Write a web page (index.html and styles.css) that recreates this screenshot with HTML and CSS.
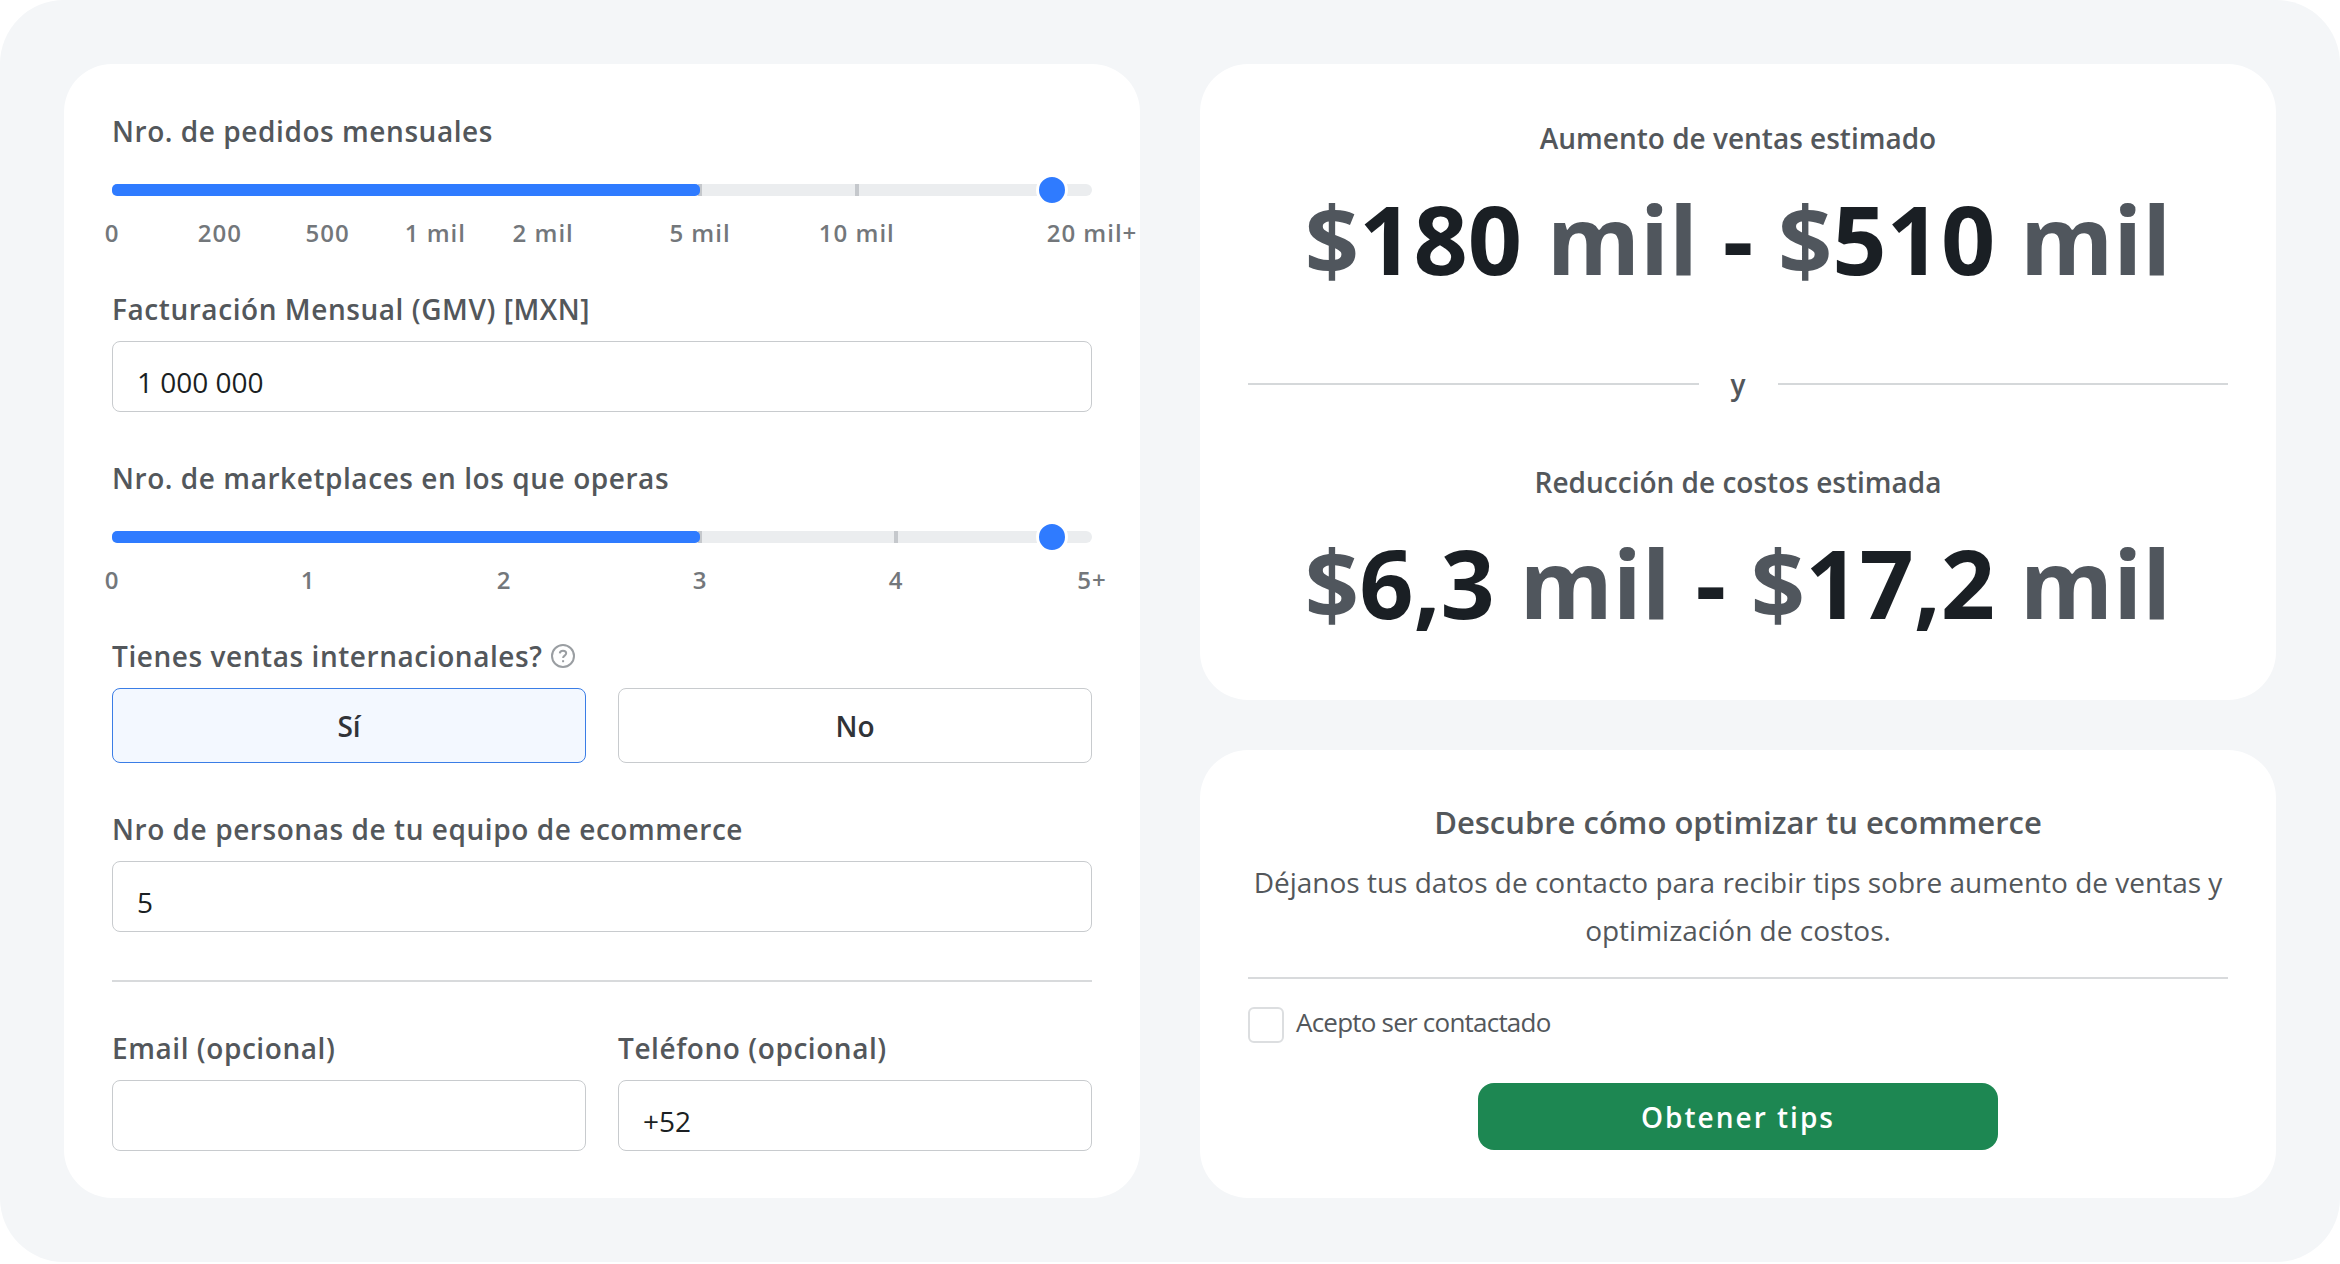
FILE: index.html
```html
<!DOCTYPE html>
<html lang="es">
<head>
	<meta charset="UTF-8">
	<meta name="viewport" content="width=device-width, initial-scale=1">
	<title>Calculadora</title>
	<link rel="stylesheet" href="styles.css">
</head>
<body>
	<main class="calculator">
		<form class="card form" id="calc">
			<div class="field">
				<label for="orders">Nro. de pedidos mensuales</label>
				<div class="slider">
					<div class="track orders">
						<i></i><i></i><i></i><i></i><i></i><i></i><i></i>
					</div>
					<div class="fill" style="width: 60%"></div>
					<input type="range" id="orders" min="0" max="100" step="0.5" value="97.5">
				</div>
				<div class="scale orders">
					<span>0</span>
					<span>200</span>
					<span>500</span>
					<span>1 mil</span>
					<span>2 mil</span>
					<span>5 mil</span>
					<span>10 mil</span>
					<span>20 mil+</span>
				</div>
			</div>

			<div class="field">
				<label for="gmv">Facturación Mensual (GMV) [MXN]</label>
				<input class="text" type="text" id="gmv" value="1 000 000">
			</div>

			<div class="field">
				<label for="markets">Nro. de marketplaces en los que operas</label>
				<div class="slider">
					<div class="track markets">
						<i></i><i></i><i></i><i></i><i></i>
					</div>
					<div class="fill" style="width: 60%"></div>
					<input type="range" id="markets" min="0" max="100" step="0.5" value="97.5">
				</div>
				<div class="scale markets">
					<span>0</span>
					<span>1</span>
					<span>2</span>
					<span>3</span>
					<span>4</span>
					<span>5+</span>
				</div>
			</div>

			<div class="field">
				<div class="label" id="intl">
					Tienes ventas internacionales?
					<svg class="help" viewBox="0 0 24 24" aria-hidden="true">
						<circle cx="12" cy="12" r="11"/>
						<path d="M8.8 9.4C8.9 7.6 10.2 6.7 12 6.7s3.2 1 3.2 2.6c0 2.3-3.1 2.3-3.1 4.7"/>
						<path d="M12.1 16.2v2"/>
					</svg>
				</div>
				<div class="pair" role="group" aria-labelledby="intl">
					<button type="button" class="option active">Sí</button>
					<button type="button" class="option">No</button>
				</div>
			</div>

			<div class="field">
				<label for="team">Nro de personas de tu equipo de ecommerce</label>
				<input class="text" type="text" id="team" value="5">
			</div>

			<hr>

			<div class="pair">
				<div class="field">
					<label for="email">Email (opcional)</label>
					<input class="text" type="email" id="email">
				</div>
				<div class="field">
					<label for="phone">Teléfono (opcional)</label>
					<input class="text" type="tel" id="phone" value="+52">
				</div>
			</div>
		</form>

		<div class="side">
			<section class="card results">
				<h2>Aumento de ventas estimado</h2>
				<p class="amount"><span>$</span>180 <span>mil</span> - <span>$</span>510 <span>mil</span></p>
				<div class="and">y</div>
				<h2>Reducción de costos estimada</h2>
				<p class="amount"><span>$</span>6,3 <span>mil</span> - <span>$</span>17,2 <span>mil</span></p>
			</section>

			<section class="card tips">
				<h3>Descubre cómo optimizar tu ecommerce</h3>
				<p>Déjanos tus datos de contacto para recibir tips sobre aumento de ventas y optimización de costos.</p>
				<hr>
				<label class="accept">
					<input type="checkbox" form="calc">
					Acepto ser contactado
				</label>
				<button type="submit" class="submit" form="calc">Obtener tips</button>
			</section>
		</div>
	</main>

	<script type="text/javascript">
		var options = document.querySelectorAll('.option');
		options.forEach(function(option){
			option.onclick = function(){
				options.forEach(function(o){
					o.classList.remove('active');
				});
				option.classList.add('active');
			}
		});
	</script>
</body>
</html>
```
FILE: styles.css
```css
* {
	margin: 0;
	padding: 0;
	box-sizing: border-box;
}

body {
	background: #fff;
	color: #53575b;
	font-family: "Open Sans", "Noto Sans", sans-serif;
	font-size: 28px;
	line-height: 40px;
}

input, button {
	font: inherit;
	color: #1b1f23;
}

.calculator {
	display: grid;
	grid-template-columns: 1fr 1fr;
	gap: 60px;
	padding: 64px;
	background: #f4f6f8;
	border-radius: 64px;
}

.card {
	padding: 48px;
	background: #fff;
	border-radius: 48px;
}

hr {
	border: none;
	border-top: 2px solid #d8dadc;
}

/* form */
.form {
	display: flex;
	flex-direction: column;
	gap: 46px;
	padding: 47px 48px;
}

.form hr {
	margin-top: 2px;
}

.field {
	display: flex;
	flex-direction: column;
	gap: 12px;
}

.field label, .label {
	font-weight: 600;
	letter-spacing: 0.02em;
}

.label {
	display: flex;
	align-items: center;
	gap: 8px;
}

.help {
	width: 24px;
	height: 24px;
	fill: none;
	stroke: #9a9ea2;
	stroke-width: 2;
}

.text {
	width: 100%;
	height: 71px;
	padding: 10px 24px 0;
	border: 1px solid #c8cbce;
	border-radius: 8px;
	background: #fff;
}

.pair {
	display: grid;
	grid-template-columns: 1fr 1fr;
	gap: 32px;
}

.option {
	height: 75px;
	border: 1px solid #c8cbce;
	border-radius: 8px;
	background: #fff;
	color: #303338;
	font-weight: 600;
}

.option.active {
	border-color: #3a7de6;
	background: #f3f8ff;
}

/* sliders */
.slider {
	display: grid;
	grid-template-rows: 12px;
	align-items: center;
	margin-top: 21px;
}

.slider > * {
	grid-area: 1 / 1;
}

.track, .scale {
	display: grid;
}

.orders {
	grid-template-columns: 11fr 11fr 11fr 11fr 16fr 16fr 24fr 0;
}

.markets {
	grid-template-columns: repeat(5, 1fr) 0;
}

.track {
	height: 12px;
	border-radius: 6px;
	background: #ebedef;
}

.track i {
	width: 4px;
	margin-left: -2px;
	background: #c5c8cc;
}

.track i:first-child {
	visibility: hidden;
}

.fill {
	height: 12px;
	border-radius: 5px;
	background: #2f7bff;
}

.slider input {
	-webkit-appearance: none;
	appearance: none;
	width: 100%;
	height: 32px;
	background: none;
}

.slider input::-webkit-slider-thumb {
	-webkit-appearance: none;
	width: 32px;
	height: 32px;
	border: 3px solid #fff;
	border-radius: 50%;
	background: #2f7bff;
}

.scale {
	margin-top: 15px;
	color: #73777b;
	font-size: 24px;
	font-weight: 600;
	line-height: 20px;
	letter-spacing: 1px;
}

/* zero width, so that each text is centered on its mark */
.scale span {
	display: flex;
	justify-content: center;
	width: 0;
	white-space: nowrap;
}

/* right column */
.side {
	display: flex;
	flex-direction: column;
	gap: 50px;
	text-align: center;
}

.results {
	padding: 54px 48px 58px;
}

.results h2 {
	font-size: 28px;
	font-weight: 600;
}

.amount {
	margin-top: 20px;
	color: #1a1f24;
	font-size: 95px;
	font-weight: 700;
	line-height: 120px;
}

.amount span {
	color: #50565d;
}

.and {
	display: flex;
	align-items: center;
	gap: 32px;
	margin: 66px 0 58px;
	font-weight: 600;
}

.and::before, .and::after {
	content: "";
	flex: 1;
	border-top: 2px solid #d5d8da;
}

.tips {
	flex: 1;
}

.tips h3 {
	font-size: 31px;
	font-weight: 600;
	line-height: 48px;
}

.tips p {
	margin: 12px 0 23px;
	line-height: 48px;
}

.accept {
	display: flex;
	gap: 12px;
	margin: 28px 0 40px;
	font-size: 26px;
	line-height: 30px;
	letter-spacing: -0.03em;
}

.accept input {
	-webkit-appearance: none;
	appearance: none;
	width: 36px;
	height: 36px;
	border: 2px solid #dcdee0;
	border-radius: 6px;
}

.accept input:checked {
	background: #2f7bff;
}

.submit {
	width: 520px;
	max-width: 100%;
	height: 67px;
	border: none;
	border-radius: 16px;
	background: #1d8752;
	color: #fff;
	font-weight: 600;
	letter-spacing: 2px;
}
```
